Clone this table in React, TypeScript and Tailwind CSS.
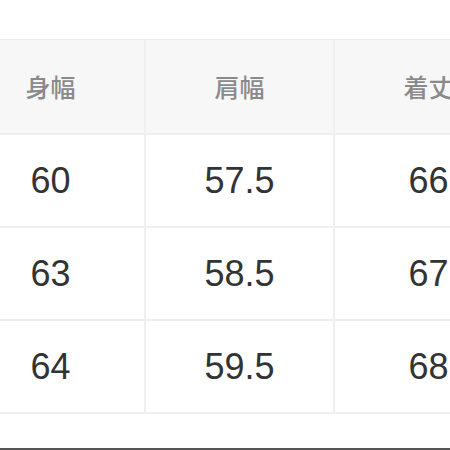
import React from "react";

const headers = ["身幅", "肩幅", "着丈"];
const rows = [
  ["60", "57.5", "66"],
  ["63", "58.5", "67"],
  ["64", "59.5", "68"],
];

export default function App() {
  return (
    <div className="w-[450px] h-[450px] bg-white overflow-hidden flex flex-col relative">
      <div className="h-[39px] shrink-0 bg-white" />
      <div className="ml-[-43px] w-[565px] grid grid-cols-3 gap-[2px] bg-[#efefef] border-t border-[#ececec] pb-[2px]">
        {headers.map((h) => (
          <div
            key={h}
            className="h-[93px] bg-[#f7f7f7] flex items-center justify-center text-[25px] font-medium text-[#8a8a8a] font-['Noto_Sans_CJK_JP',sans-serif]"
          >
            {h}
          </div>
        ))}
        {rows.flat().map((v, i) => (
          <div
            key={i}
            className="h-[91px] bg-white flex items-center justify-center text-[36px] text-[#333333] font-['Liberation_Sans',Arial,sans-serif]"
          >
            {v}
          </div>
        ))}
      </div>
      <div className="flex-1" />
      <div className="h-[2px] bg-[#555555] shrink-0" />
    </div>
  );
}
